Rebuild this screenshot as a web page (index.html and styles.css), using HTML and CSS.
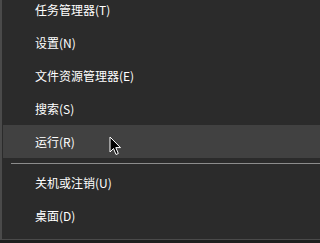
FILE: index.html
```html
<!DOCTYPE html>
<html lang="zh-CN">
<head>
<meta charset="utf-8">
<link rel="stylesheet" href="styles.css">
</head>
<body>
<div class="menu">
  <div class="item">任务管理器(T)</div>
  <div class="item">设置(N)</div>
  <div class="item">文件资源管理器(E)</div>
  <div class="item">搜索(S)</div>
  <div class="item active">运行(R)
    <svg class="cursor" width="13" height="20" viewBox="0 0 13 20">
      <path d="M1 1 L1 16 L4.5 12.5 L7 18.5 L9.3 17.5 L6.8 11.6 L11.5 11.6 Z" fill="#000" stroke="#fff" stroke-width="1" stroke-linejoin="miter"/>
    </svg>
  </div>
  <div class="sep"></div>
  <div class="item">关机或注销(U)</div>
  <div class="item">桌面(D)</div>
</div>
</body>
</html>
```

FILE: styles.css
```css
html, body {
  margin: 0;
  padding: 0;
}
body {
  background: #1e1e1e;
  height: 243px;
  overflow: hidden;
  font-family: "Noto Sans CJK SC", "Noto Sans", sans-serif;
}
.menu {
  margin-top: -7px;
  background: #2b2b2b;
  border-left: 2px solid #4a4a4a;
  border-bottom: 1px solid #4a4a4a;
  padding: 0 0 7px 1px;
}
.item {
  position: relative;
  height: 33px;
  line-height: 33px;
  padding-left: 32px;
  color: #ffffff;
  font-size: 12px;
  white-space: nowrap;
}
.item.active {
  background: #414141;
}
.sep {
  height: 8px;
  display: flex;
  flex-direction: column;
  padding-left: 8px;
}
.sep::after {
  content: "";
  margin-top: 5px;
  height: 1px;
  background: #8c8c8c;
}
.cursor {
  position: absolute;
  left: 106px;
  top: 11px;
}
```
